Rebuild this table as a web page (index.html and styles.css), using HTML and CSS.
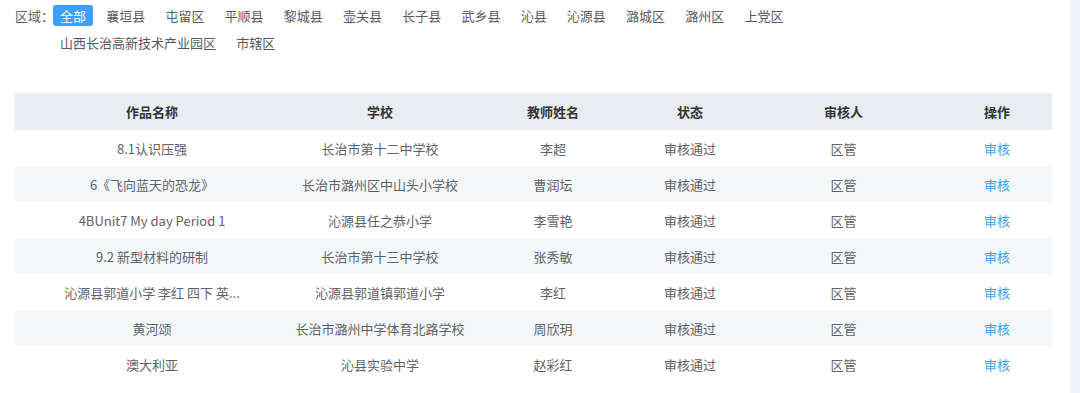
FILE: index.html
```html
<!DOCTYPE html>
<html lang="zh-CN">
<head>
<meta charset="utf-8">
<title>作品审核</title>
<link rel="stylesheet" href="styles.css">
</head>
<body>
<div class="page">
  <main class="content">
    <div class="filter">
      <span class="filter-label">区域：</span>
      <ul class="tags">
        <li class="tag is-active">全部</li>
        <li class="tag">襄垣县</li>
        <li class="tag">屯留区</li>
        <li class="tag">平顺县</li>
        <li class="tag">黎城县</li>
        <li class="tag">壶关县</li>
        <li class="tag">长子县</li>
        <li class="tag">武乡县</li>
        <li class="tag">沁县</li>
        <li class="tag">沁源县</li>
        <li class="tag">潞城区</li>
        <li class="tag">潞州区</li>
        <li class="tag">上党区</li>
        <li class="tag">山西长治高新技术产业园区</li>
        <li class="tag">市辖区</li>
      </ul>
    </div>
    <table class="grid">
      <colgroup>
        <col class="c-name">
        <col class="c-school">
        <col class="c-teacher">
        <col class="c-status">
        <col class="c-reviewer">
        <col class="c-op">
      </colgroup>
      <thead>
        <tr><th>作品名称</th><th>学校</th><th>教师姓名</th><th>状态</th><th>审核人</th><th>操作</th></tr>
      </thead>
      <tbody>
        <tr><td>8.1认识压强</td><td>长治市第十二中学校</td><td>李超</td><td>审核通过</td><td>区管</td><td><a class="op-link">审核</a></td></tr>
        <tr><td>6《飞向蓝天的恐龙》</td><td>长治市潞州区中山头小学校</td><td>曹润坛</td><td>审核通过</td><td>区管</td><td><a class="op-link">审核</a></td></tr>
        <tr><td>4BUnit7 My day Period 1</td><td>沁源县任之恭小学</td><td>李雪艳</td><td>审核通过</td><td>区管</td><td><a class="op-link">审核</a></td></tr>
        <tr><td>9.2 新型材料的研制</td><td>长治市第十三中学校</td><td>张秀敏</td><td>审核通过</td><td>区管</td><td><a class="op-link">审核</a></td></tr>
        <tr><td>沁源县郭道小学 李红 四下 英...</td><td>沁源县郭道镇郭道小学</td><td>李红</td><td>审核通过</td><td>区管</td><td><a class="op-link">审核</a></td></tr>
        <tr><td>黄河颂</td><td>长治市潞州中学体育北路学校</td><td>周欣玥</td><td>审核通过</td><td>区管</td><td><a class="op-link">审核</a></td></tr>
        <tr><td>澳大利亚</td><td>沁县实验中学</td><td>赵彩红</td><td>审核通过</td><td>区管</td><td><a class="op-link">审核</a></td></tr>
      </tbody>
    </table>
  </main>
  <aside class="side-strip"></aside>
</div>
</body>
</html>
```

FILE: styles.css
```css
* { box-sizing: border-box; }
html, body { margin: 0; padding: 0; background: #fff; }
body {
  font-family: "Noto Sans CJK SC", "Microsoft YaHei", "Liberation Sans", sans-serif;
  font-size: 13px;
  color: #606266;
}
.page {
  display: flex;
  height: 393px;
  overflow: hidden;
}
.content {
  flex: 1;
  min-width: 0;
  padding: 5px 18px 0 15px;
}
.side-strip {
  width: 10px;
  flex: none;
  background: #f0f3f7;
}
.filter {
  display: flex;
  align-items: flex-start;
  margin-bottom: 40px;
}
.filter-label {
  flex: none;
  width: 38px;
  white-space: nowrap;
  line-height: 21px;
  color: #606266;
}
.tags {
  list-style: none;
  margin: 0;
  padding: 0;
  display: flex;
  flex-wrap: wrap;
  column-gap: 6.2px;
  row-gap: 6px;
  max-width: 800px;
}
.tag {
  height: 21px;
  line-height: 21px;
  padding: 0 7px;
  border-radius: 3px;
  color: #555a60;
  white-space: nowrap;
}
.tag.is-active {
  background: #409eff;
  color: #fff;
}
.grid {
  width: 1037px;
  table-layout: fixed;
  border-collapse: collapse;
}
.c-name { width: 274px; }
.c-school { width: 182px; }
.c-teacher { width: 164px; }
.c-status { width: 110px; }
.c-reviewer { width: 197px; }
.c-op { width: 110px; }
.grid th, .grid td {
  padding: 0 6px;
  text-align: center;
  vertical-align: middle;
  white-space: nowrap;
  overflow: hidden;
  text-overflow: ellipsis;
}
.grid th {
  height: 37px;
  background: #e9ecf0;
  color: #333;
  font-weight: bold;
}
.grid td {
  height: 36px;
  color: #606266;
}
.grid tbody tr:nth-child(even) td {
  background: #f4f7fa;
}
.op-link {
  color: #409eff;
  cursor: pointer;
}
```
